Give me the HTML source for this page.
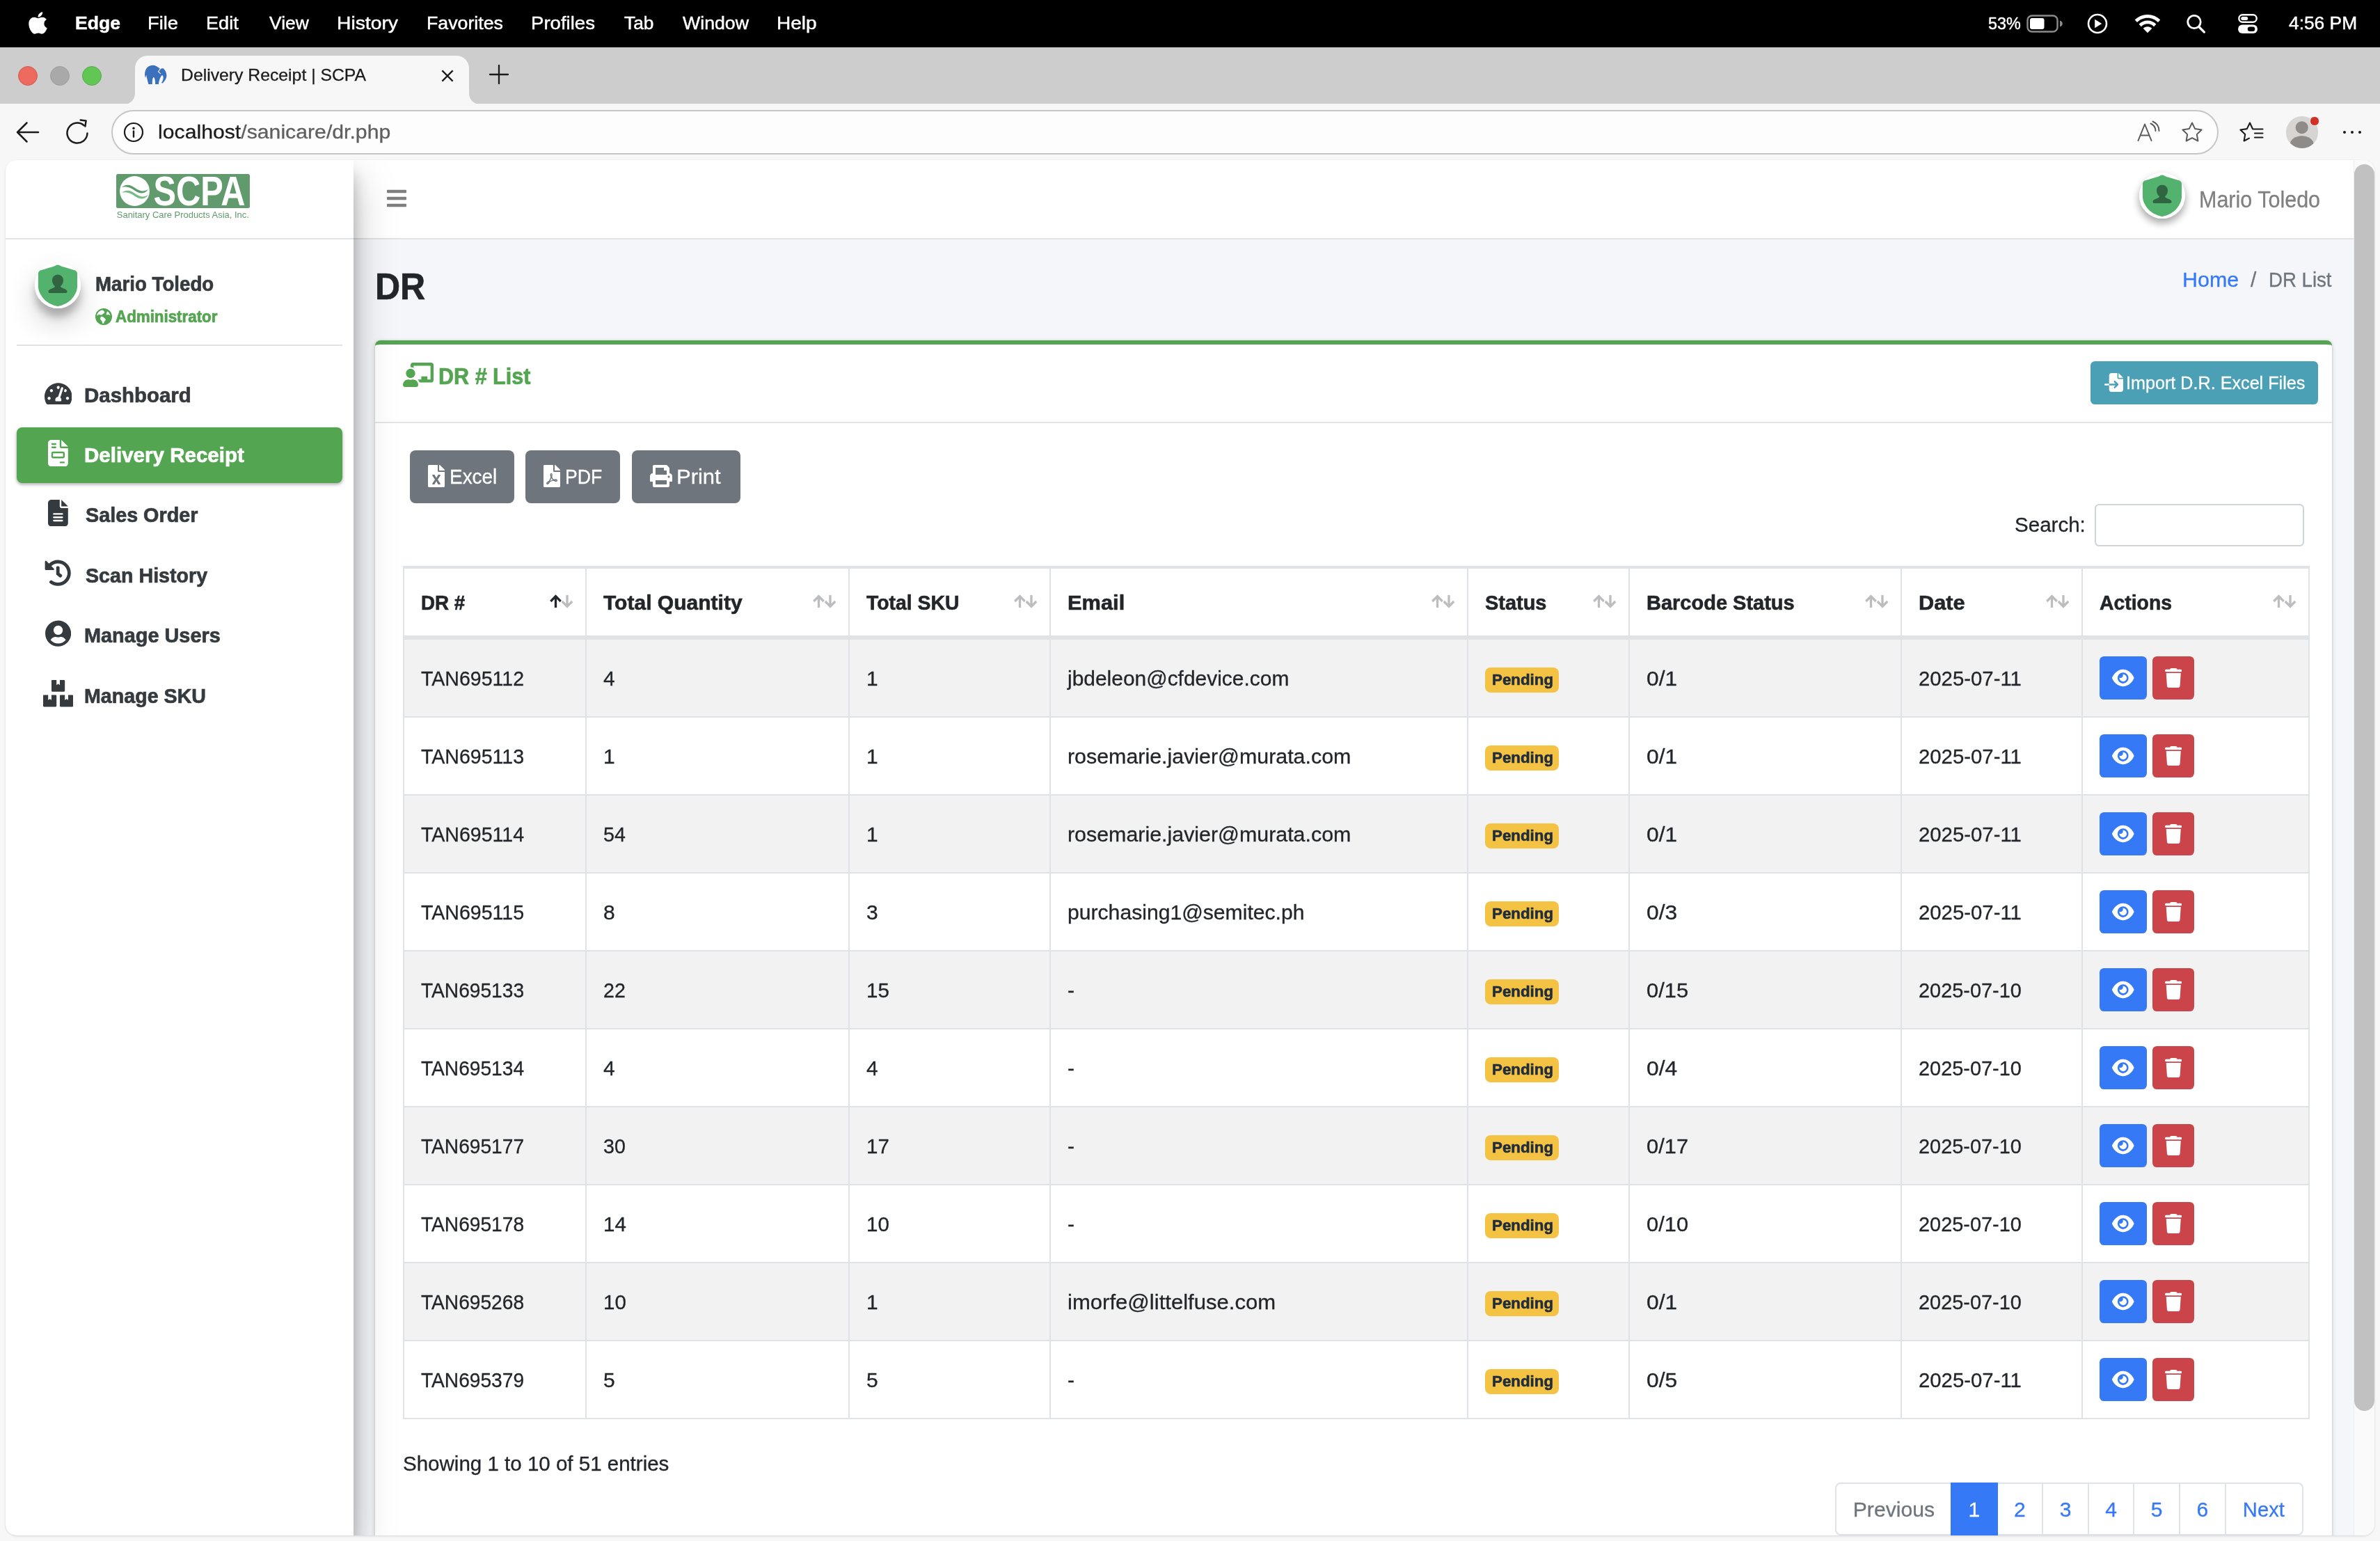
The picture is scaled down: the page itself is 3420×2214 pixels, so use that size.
<!DOCTYPE html>
<html lang="en"><head><meta charset="utf-8"><title>Delivery Receipt | SCPA</title>
<style>
*{box-sizing:border-box}
html,body{margin:0;padding:0}
body{width:3420px;height:2214px;overflow:hidden;position:relative;background:#f7f7f7;font-family:"Liberation Sans",sans-serif;color:#222529}
.t{position:absolute;white-space:nowrap;display:block}
#page{-webkit-text-stroke:.3px}
.t.b{-webkit-text-stroke:.7px}
#dt th,.badge{-webkit-text-stroke:.6px}
svg{display:block}
#menubar,#tabbar,#toolbar,#page{will-change:transform}
#menubar .t{-webkit-text-stroke:.45px #fff}
#tabbar .t{-webkit-text-stroke:.3px #1b1b1b}
#toolbar .t{-webkit-text-stroke:.3px}
#menubar{position:absolute;left:0;top:0;width:3420px;height:68px;background:#000}
#tabbar{position:absolute;left:0;top:68px;width:3420px;height:82px;background:#cdcdcd}
.tl{position:absolute;top:27px;width:28px;height:28px;border-radius:50%;border:1.500px solid}
#toolbar{position:absolute;left:0;top:149px;width:3420px;height:81px;background:#f7f7f7}
#urlbox{position:absolute;left:160px;top:8.700px;width:3028px;height:64px;border-radius:32px;background:#fdfdfd;border:2.500px solid #c6c6c6}
#page{position:absolute;left:8px;top:230px;width:3404px;height:1976px;border-radius:16px;overflow:hidden;background:#f4f6f9;box-shadow:0 1px 3px rgba(0,0,0,.14)}
#sb{position:absolute;left:3374px;top:0;width:30px;height:1976px;background:#fafafa;border-left:1px solid #ececec}
#thumb{position:absolute;left:0;top:6px;width:29px;height:1791px;border-radius:14.500px;background:#c1c1c1}
#navbar{position:absolute;left:500px;top:0;width:2874px;height:114px;background:#fff;border-bottom:2px solid #dfe2e6}
.av{position:absolute;width:66px;height:66px;border-radius:50%;background:#fff;box-shadow:0 20px 40px rgba(0,0,0,.19),0 12px 12px rgba(0,0,0,.23)}
#card{position:absolute;left:531px;top:259px;width:2812px;height:1800px;background:#fff;border-top:6px solid #53a551;border-radius:8px 8px 0 0;box-shadow:0 0 2px rgba(0,0,0,.125),0 2px 6px rgba(0,0,0,.2)}
#card>*{margin-top:-6px}
#cardhead{position:absolute;left:0;top:110.500px;width:2812px;height:2px;background:#e3e4e6;margin-top:0}
.btn{position:absolute}
#search{position:absolute;width:301px;height:61.500px;border:2px solid #cfd4d9;border-radius:6.400px;background:#fff}
#dt{position:absolute;table-layout:fixed;width:2740px;border-collapse:separate;border-spacing:0;border:2px solid #dfe2e6;border-right-width:0;border-bottom-width:2px;font-size:30px}
#dt td>span.tx{position:relative;top:.5px}
#dt th>span{position:relative;top:0.5px}
#dt th,#dt td{padding:0 0 0 24px;text-align:left;white-space:nowrap;overflow:hidden;position:relative;border-right:2px solid #dfe2e6}
#dt th{height:102px;line-height:96px;border-top:2px solid #dfe2e6;border-bottom:4px solid #dfe2e6;font-weight:700}
#dt td{height:112px;line-height:110px;border-top:2px solid #dfe2e6}
#dt tr.odd td{background:#f2f2f2}
#dt tr.even td{background:#fff}
.sort{position:absolute;right:17px;top:36.500px}
.badge{display:inline-block;background:#f5c344;color:#222d3c;font-weight:700;font-size:22.600px;line-height:36px;height:36px;padding:0 0 0 10px;width:106px;border-radius:8px;vertical-align:top;margin-top:40px;overflow:hidden}
.ab{position:absolute;top:24px;height:62px;border-radius:6.400px;display:flex;align-items:center;justify-content:center}
#pg{position:absolute;height:76px;display:flex;font-size:30px}
.pl{display:block;height:76px;line-height:73px;text-align:center;border:2px solid #dfe2e6;margin-left:-2px;background:#fff;white-space:nowrap}
.pl.first{margin-left:0;border-radius:8px 0 0 8px}
.pl.last{border-radius:0 8px 8px 0}
.pl.act{background:#3579f6;border-color:#3579f6;position:relative}
#sidebar{position:absolute;left:0;top:0;width:500px;height:1976px;background:#fff;box-shadow:0 28px 56px rgba(0,0,0,.25),0 20px 20px rgba(0,0,0,.22)}
#brandline{position:absolute;left:0;top:112px;width:500px;height:2px;background:#dfe2e6}
#userline{position:absolute;left:16px;top:265px;width:468px;height:2px;background:#dfe2e6}
#navact{position:absolute;left:16px;width:468px;height:80px;border-radius:8px;background:#53a551;box-shadow:0 2px 6px rgba(0,0,0,.12),0 2px 4px rgba(0,0,0,.24)}
</style></head>
<body>
<div id="menubar">
<svg class="fa" viewBox="0 0 384 512" width="27.00" height="36" style="position:absolute;left:40.8px;top:14.5px" fill="#fff"><path d="M318.7 268.7c-.2-36.7 16.400-64.400 50-84.800-18.800-26.900-47.200-41.700-84.700-44.600-35.500-2.800-74.300 20.700-88.500 20.700-15 0-49.400-19.700-76.400-19.700C63.300 141.200 4 184.800 4 273.500q0 39.300 14.400 81.200c12.800 36.700 59 126.700 107.200 125.200 25.200-.6 43-17.900 75.800-17.900 31.800 0 48.300 17.900 76.400 17.900 48.600-.7 90.400-82.500 102.600-119.300-65.200-30.700-61.700-90-61.700-91.900zm-56.600-164.200c27.300-32.400 24.800-61.900 24-72.500-24.100 1.400-52 16.400-67.900 34.900-17.500 19.800-27.800 44.300-25.600 71.900 26.100 2 49.900-11.400 69.500-34.300z"/></svg>
<span class="t b" style="left:108.0px;top:19.8px;font-size:26px;line-height:26px;color:#fff;font-weight:700;transform:scaleX(1.0225);transform-origin:0 50%;">Edge</span>
<span class="t" style="left:212.2px;top:19.8px;font-size:26px;line-height:26px;color:#fff;font-weight:400;transform:scaleX(1.0498);transform-origin:0 50%;">File</span>
<span class="t" style="left:296.4px;top:19.8px;font-size:26px;line-height:26px;color:#fff;font-weight:400;transform:scaleX(1.0441);transform-origin:0 50%;">Edit</span>
<span class="t" style="left:386.8px;top:19.8px;font-size:26px;line-height:26px;color:#fff;font-weight:400;transform:scaleX(1.0159);transform-origin:0 50%;">View</span>
<span class="t" style="left:484.4px;top:19.8px;font-size:26px;line-height:26px;color:#fff;font-weight:400;transform:scaleX(1.0875);transform-origin:0 50%;">History</span>
<span class="t" style="left:612.6px;top:19.8px;font-size:26px;line-height:26px;color:#fff;font-weight:400;transform:scaleX(1.0284);transform-origin:0 50%;">Favorites</span>
<span class="t" style="left:762.9px;top:19.8px;font-size:26px;line-height:26px;color:#fff;font-weight:400;transform:scaleX(1.0603);transform-origin:0 50%;">Profiles</span>
<span class="t" style="left:897.0px;top:19.8px;font-size:26px;line-height:26px;color:#fff;font-weight:400;transform:scaleX(1.0130);transform-origin:0 50%;">Tab</span>
<span class="t" style="left:980.8px;top:19.8px;font-size:26px;line-height:26px;color:#fff;font-weight:400;transform:scaleX(1.0270);transform-origin:0 50%;">Window</span>
<span class="t" style="left:1116.3px;top:19.8px;font-size:26px;line-height:26px;color:#fff;font-weight:400;transform:scaleX(1.0782);transform-origin:0 50%;">Help</span>
<span class="t" style="left:2856.6px;top:21.5px;font-size:24px;line-height:24px;color:#fff;font-weight:400;transform:scaleX(0.9728);transform-origin:0 50%;">53%</span>
<span class="t" style="left:3289.0px;top:19.8px;font-size:26px;line-height:26px;color:#fff;font-weight:400;transform:scaleX(1.0129);transform-origin:0 50%;">4:56 PM</span>
<svg style="position:absolute;left:2910px;top:18px" width="60" height="32" viewBox="0 0 60 32"><rect x="3.5" y="4.5" width="43" height="23" rx="6.5" fill="none" stroke="#8a8a8a" stroke-width="2.4"/><rect x="7" y="8" width="20.5" height="16" rx="3.2" fill="#fff"/><path d="M50 11.5v9c2.4-.7 3.8-2.500 3.800-4.500s-1.400-3.800-3.800-4.500z" fill="#8a8a8a"/></svg>
<svg style="position:absolute;left:2998px;top:18px" width="32" height="32" viewBox="0 0 32 32"><circle cx="16" cy="16" r="13" fill="none" stroke="#fff" stroke-width="2.6"/><path d="M12.200 9.800v12.400l10-6.200z" fill="#fff"/></svg>
<svg style="position:absolute;left:3067px;top:19px" width="38" height="30" viewBox="0 0 38 30"><path d="M19 2C11.700 2 5.200 4.900 .7 9.600l3.300 3.400C7.800 9.100 13.100 6.700 19 6.700s11.200 2.400 15 6.300l3.300-3.400C32.800 4.900 26.300 2 19 2z" fill="#fff"/><path d="M19 10.600c-4.900 0-9.300 2-12.400 5.200l3.300 3.400c2.300-2.400 5.500-3.900 9.100-3.900s6.800 1.500 9.100 3.900l3.300-3.400c-3.100-3.200-7.500-5.200-12.400-5.200z" fill="#fff"/><path d="M19 19.200c-2.500 0-4.700 1-6.300 2.600L19 28.300l6.300-6.500c-1.600-1.600-3.800-2.600-6.300-2.600z" fill="#fff"/></svg>
<svg style="position:absolute;left:3140px;top:19px" width="32" height="32" viewBox="0 0 32 32"><circle cx="13" cy="12.500" r="9.200" fill="none" stroke="#fff" stroke-width="2.800"/><path d="M19.800 19.500l7.600 7.600" stroke="#fff" stroke-width="3.200" stroke-linecap="round"/></svg>
<svg style="position:absolute;left:3216px;top:20px" width="28" height="28" viewBox="0 0 28 28"><rect x="1.300" y="1.300" width="25.400" height="10.400" rx="5.200" fill="none" stroke="#fff" stroke-width="2.400"/><rect x="4.200" y="4" width="10" height="5" rx="2.500" fill="#fff"/><rect x="0" y="15.500" width="28" height="12.500" rx="6.250" fill="#fff"/><rect x="13.800" y="18.500" width="10.500" height="6.500" rx="3.250" fill="#000"/></svg>
</div>
<div id="tabbar">
<div class="tl" style="left:26px;background:#ed6a5f;border-color:#d5574c"></div>
<div class="tl" style="left:72px;background:#a9a9a9;border-color:#9c9c9c"></div>
<div class="tl" style="left:118px;background:#62c655;border-color:#52ac46"></div>
<svg style="position:absolute;left:178px;top:12px" width="512" height="70" viewBox="0 0 512 70"><path d="M0 70c9 0 16-7 16-16V18C16 8 24 0 34 0h444c10 0 18 8 18 18v36c0 9 7 16 16 16z" fill="#f7f7f7"/></svg>
<svg style="position:absolute;left:207px;top:25px" width="34" height="30" viewBox="0 0 34 30"><path d="M2.100 18.900C1.200 16.800.900 14.500 1.100 12.300 1.400 9.600 2.200 7.400 3.200 5.700 4.400 3.900 6 2.600 7.900 1.800 9.400 1.100 11 .800 12.600.800c1.900 0 3.700.500 5.400 1.400 2 1 3.700 2.400 5.100 3.900 1.300-.600 2.800-1.100 4.300-1.200 1.500 1.300 2.700 2.900 3.500 4.700.900 1.700 1.400 3.500 1.500 5.400.1 2-.400 4-1.500 5.900-1.100 2.200-2.700 4.200-4.700 5.800L25 25.900c1.200-1.500 2-3.200 2.400-5 .3-1.500.3-2.900 0-4.300-.300-.900-.900-1.500-1.600-1.600-1.200 1.300-2.300 3.100-3.100 5.100-.900 2.400-1.500 5.100-1.900 7.800H16.100c.1-2.100 0-4.100-.400-5.900-.400-2-1-3.900-1.900-3.900s-1.500 1.900-1.800 3.900c-.300 1.800-.300 3.800-.200 5.900H6.400C5.800 25.900 5.300 23.900 4.800 22 4.200 19.500 3.700 17 3.200 14.600 2.800 16 2.400 17.500 2.100 18.900Z" fill="#3a70bc"/><path d="M23.700 5.500L20.400 9.800l3.500 3.300" fill="none" stroke="#f7f7f7" stroke-width="1.100" stroke-linejoin="round"/></svg>
<span class="t" style="left:260.0px;top:27.9px;font-size:24px;line-height:24px;color:#1b1b1b;font-weight:400;transform:scaleX(1.0317);transform-origin:0 50%;">Delivery Receipt | SCPA</span>
<svg style="position:absolute;left:632px;top:30px" width="22" height="22" viewBox="0 0 22 22"><path d="M3.400 3.400l15.200 15.200M18.600 3.400L3.400 18.600" stroke="#1b1b1b" stroke-width="2.300" stroke-linecap="butt"/></svg>
<svg style="position:absolute;left:702px;top:24px" width="30" height="30" viewBox="0 0 30 30"><path d="M15 2v26M2 15h26" stroke="#1b1b1b" stroke-width="2.300" stroke-linecap="round"/></svg>
</div>
<div id="toolbar">
<svg style="position:absolute;left:22px;top:23px" width="36" height="36" viewBox="0 0 36 36"><path d="M33 18H4M16.500 4.500L3 18l13.500 13.500" fill="none" stroke="#1b1b1b" stroke-width="2.500" stroke-linecap="round" stroke-linejoin="round"/></svg>
<svg style="position:absolute;left:94px;top:22px" width="36" height="38" viewBox="0 0 36 38"><path d="M31.500 20.500A14.500 14.500 0 1 1 26.700 9.200" fill="none" stroke="#1b1b1b" stroke-width="2.500" stroke-linecap="round"/><path d="M21.500 2.500h8v8" fill="none" stroke="#1b1b1b" stroke-width="2.500" stroke-linecap="round" stroke-linejoin="round" transform="rotate(8 29 3)"/></svg>
<div id="urlbox"></div>
<svg style="position:absolute;left:176px;top:25px" width="32" height="32" viewBox="0 0 32 32"><circle cx="16" cy="16" r="13" fill="none" stroke="#1b1b1b" stroke-width="2.200"/><circle cx="16" cy="10.300" r="1.700" fill="#1b1b1b"/><path d="M16 14.500v8" stroke="#1b1b1b" stroke-width="2.400" stroke-linecap="round"/></svg>
<span class="t" style="left:227.3px;top:26.9px;font-size:28px;line-height:28px;color:#1b1b1b;transform:scaleX(1.0792);transform-origin:0 50%">localhost<span style="color:#5f5f5f">/sanicare/dr.php</span></span>
<svg style="position:absolute;left:3070px;top:24px" width="36" height="32" viewBox="0 0 36 32"><path d="M2.500 29L12 5.500 21.500 29M5.500 21.500h13" fill="none" stroke="#5a5a5a" stroke-width="2" stroke-linejoin="round" stroke-linecap="round"/><path d="M20.500 4.500c4.500 2 7 6 7 10.500M23.500 1.500c5.500 2.500 9 7.500 9 13.500" fill="none" stroke="#5a5a5a" stroke-width="2" stroke-linecap="round"/></svg>
<svg style="position:absolute;left:3134px;top:25px" width="32" height="32" viewBox="0 0 32 32"><path d="M16 2.500l4.200 8.600 9.400 1.400-6.800 6.600 1.600 9.400L16 24.100l-8.400 4.400 1.600-9.400-6.800-6.600 9.400-1.400z" fill="none" stroke="#5a5a5a" stroke-width="2" stroke-linejoin="round"/></svg>
<svg style="position:absolute;left:3218px;top:25px" width="36" height="32" viewBox="0 0 36 32"><path d="M15 2.500l3.800 8.200M15 2.500l-4.200 8.600-9.400 1.400 6.800 6.600-1.600 9.400 7.400-3.900" fill="none" stroke="#1b1b1b" stroke-width="2.100" stroke-linejoin="round" stroke-linecap="round"/><path d="M19.500 11.500h14M22 17.500h11.500M22 23.500h11.500" stroke="#1b1b1b" stroke-width="2.100" stroke-linecap="round"/></svg>
<div style="position:absolute;left:3285.300px;top:18.300px;width:45.400px;height:45.400px;border-radius:50%;overflow:hidden;background:#d6d5d3"><svg width="45.400" height="45.400" viewBox="1.300 1.300 45.400 45.400" fill="#8f8b88"><circle cx="24" cy="17.500" r="9"/><ellipse cx="24" cy="42" rx="17" ry="12.500"/></svg></div>
<div style="position:absolute;left:3319.200px;top:18.200px;width:13.600px;height:13.600px;border-radius:50%;background:#d22f26;border:1.200px solid #f7f7f7"></div>
<div style="position:absolute;left:3366.6px;top:38.600px;width:4.800px;height:4.800px;border-radius:50%;background:#1b1b1b"></div>
<div style="position:absolute;left:3377.6px;top:38.600px;width:4.800px;height:4.800px;border-radius:50%;background:#1b1b1b"></div>
<div style="position:absolute;left:3388.6px;top:38.600px;width:4.800px;height:4.800px;border-radius:50%;background:#1b1b1b"></div>
</div>
<div id="page">
<div id="sb"><div id="thumb"></div></div>
<div id="navbar">
<svg class="fa" viewBox="0 0 448 512" width="28.00" height="32" style="position:absolute;left:48px;top:39.3px" fill="#7f7f7f"><path d="M16 132h416c8.837 0 16-7.163 16-16V76c0-8.837-7.163-16-16-16H16C7.163 60 0 67.163 0 76v40c0 8.837 7.163 16 16 16zm0 160h416c8.837 0 16-7.163 16-16v-40c0-8.837-7.163-16-16-16H16c-8.837 0-16 7.163-16 16v40c0 8.837 7.163 16 16 16zm0 160h416c8.837 0 16-7.163 16-16v-40c0-8.837-7.163-16-16-16H16c-8.837 0-16 7.163-16 16v40c0 8.837 7.163 16 16 16z"/></svg>
<div class="av" style="left:2565.900px;top:17.900px;box-shadow:0 6px 12px rgba(0,0,0,.16),0 6px 12px rgba(0,0,0,.23)"></div>
<svg style="position:absolute;left:2565.9px;top:17.9px" width="66" height="66" viewBox="0 0 66 66"><circle cx="33" cy="33" r="33" fill="#fff"/><path d="M33 3.600C31.800 3.600 30.600 4.100 29.400 4.800 27.200 6 25 6.500 22.900 7.100 19.600 8.100 16.300 9.200 13.100 10.100 10.500 10.800 8.600 11.200 7.600 11.800 5.600 12.900 4.900 14.800 4.900 17V33C4.900 37.500 5.700 41 7.400 44.200 9 47.400 10.800 50.200 13.100 52.700 16 55.800 19.400 58 22.900 59.700 26 61.200 29.500 62.300 31.500 62.800 32.500 63.100 33.500 63.100 34.500 62.800 36.500 62.300 40 61.200 43.100 59.700 46.600 58 50 55.800 52.900 52.700 55.200 50.200 57 47.400 58.600 44.200 60.300 41 61.100 37.500 61.100 33V17C61.100 14.800 60.400 12.900 58.400 11.800 57.400 11.200 55.500 10.800 52.900 10.100 49.700 9.200 46.400 8.100 43.100 7.100 41 6.500 38.800 6 36.600 4.800 35.400 4.100 34.200 3.600 33 3.600Z" fill="#53b36e"/><path d="M33 17.500c-4.700 0-8 3.600-8 8.300 0 3.700 1.700 6.900 4.100 8.500-.2 1.300-1.200 2-3.200 2.600-3.700 1.100-6.400 2.500-6.400 5.100 0 1.200.9 2 2.100 2h22.800c1.200 0 2.100-.8 2.100-2 0-2.600-2.700-4-6.400-5.100-2-.6-3-1.300-3.200-2.600 2.400-1.600 4.100-4.800 4.100-8.500 0-4.700-3.300-8.300-8-8.300z" fill="#316542"/></svg>
<span class="t" style="left:2652.2px;top:39.6px;font-size:33px;line-height:33px;color:#808080;font-weight:400;transform:scaleX(0.9242);transform-origin:0 50%;">Mario Toledo</span>
</div>
<span class="t b" style="left:530.7px;top:153.8px;font-size:54px;line-height:54px;color:#222529;font-weight:700;transform:scaleX(0.9257);transform-origin:0 50%;">DR</span>
<span class="t" style="left:3127.5px;top:157.1px;font-size:30px;line-height:30px;color:#3579f6;font-weight:400;transform:scaleX(1.0150);transform-origin:0 50%;">Home</span>
<span class="t" style="left:3226.0px;top:157.1px;font-size:30px;line-height:30px;color:#6e757c;font-weight:400;;">/</span>
<span class="t" style="left:3251.9px;top:157.1px;font-size:30px;line-height:30px;color:#6e757c;font-weight:400;transform:scaleX(0.9205);transform-origin:0 50%;">DR List</span>
<div id="card">
<div id="cardhead"></div>
<svg class="fa" viewBox="0 0 640 512" width="44.00" height="35.2" style="position:absolute;left:40px;top:32px" fill="#53a551"><path d="M208 352c-2.39 0-4.78.35-7.06 1.09C187.98 357.3 174.35 360 160 360c-14.35 0-27.98-2.7-40.95-6.91-2.28-.74-4.66-1.09-7.05-1.09C49.94 352-.33 402.48 0 464.62.14 490.88 21.73 512 48 512h224c26.27 0 47.86-21.12 48-47.38.33-62.14-49.94-112.62-112-112.62zm-48-32c53.02 0 96-42.98 96-96s-42.98-96-96-96-96 42.98-96 96 42.98 96 96 96zM592 0H208c-26.47 0-48 22.25-48 49.59V96c23.42 0 45.1 6.78 64 17.8V64h352v288h-64v-64H384v64h-76.24c19.1 16.69 33.12 38.73 39.69 64H592c26.47 0 48-22.25 48-49.59V49.59C640 22.25 618.47 0 592 0z"/></svg>
<span class="t b" style="left:91.1px;top:34.6px;font-size:33px;line-height:33px;color:#53a551;font-weight:700;transform:scaleX(0.9260);transform-origin:0 50%;">DR # List</span>
<div class="btn" style="left:2465px;top:30px;width:327px;height:62px;background:#4ba0b5;border-radius:6.4px"></div>
<svg class="fa" viewBox="0 0 512 512" width="27.00" height="27" style="position:absolute;left:2484.5px;top:46.5px" fill="#fff"><path d="M128 64c0-35.300 28.700-64 64-64H352V128c0 17.700 14.300 32 32 32H512V448c0 35.300-28.700 64-64 64H192c-35.300 0-64-28.700-64-64V336H302.100l-39 39c-9.400 9.400-9.400 24.600 0 33.900s24.600 9.400 33.900 0l80-80c9.400-9.400 9.400-24.600 0-33.900l-80-80c-9.400-9.400-24.600-9.400-33.900 0s-9.400 24.600 0 33.900l39 39H128V64zm0 224v48H24c-13.300 0-24-10.700-24-24s10.700-24 24-24H128zM512 128H384V0L512 128z"/></svg>
<span class="t" style="left:2515.8px;top:48.2px;font-size:26.3px;line-height:26.3px;color:#fff;font-weight:400;transform:scaleX(0.9572);transform-origin:0 50%;">Import D.R. Excel Files</span>
<div class="btn" style="left:50px;top:158px;width:150px;height:76px;background:#6e757c;border-radius:8px"></div>
<svg class="fa" viewBox="0 0 384 512" width="24.00" height="32" style="position:absolute;left:76px;top:179px" fill="#fff"><path d="M224 136V0H24C10.700 0 0 10.700 0 24v464c0 13.300 10.700 24 24 24h336c13.300 0 24-10.700 24-24V160H248c-13.200 0-24-10.800-24-24zm60.100 106.500L224 336l60.100 93.500c5.100 8-.6 18.500-10.100 18.500h-34.900c-4.400 0-8.500-2.400-10.600-6.300C208.900 405.500 192 373 192 373c-6.400 14.800-10 20-36.600 68.800-2.100 3.900-6.100 6.300-10.500 6.300H110c-9.500 0-15.200-10.500-10.100-18.500l60.300-93.500-60.300-93.500c-5.200-8 .6-18.500 10.100-18.500h34.800c4.400 0 8.500 2.400 10.600 6.300 26.100 48.800 20 33.600 36.600 68.500 0 0 6.100-11.700 36.600-68.500 2.100-3.900 6.200-6.300 10.600-6.300H274c9.500-.1 15.200 10.400 10.100 18.400zM384 121.900v6.100H256V0h6.100c6.400 0 12.500 2.500 17 7l97.900 98c4.500 4.500 7 10.600 7 16.900z"/></svg>
<span class="t" style="left:106.5px;top:180.6px;font-size:30px;line-height:30px;color:#fff;font-weight:400;transform:scaleX(0.9312);transform-origin:0 50%;">Excel</span>
<div class="btn" style="left:216px;top:158px;width:136px;height:76px;background:#6e757c;border-radius:8px"></div>
<svg class="fa" viewBox="0 0 384 512" width="24.00" height="32" style="position:absolute;left:242px;top:179px" fill="#fff"><path d="M181.900 256.100c-5-16-4.900-46.900-2-46.900 8.400 0 7.600 36.900 2 46.900zm-1.700 47.200c-7.700 20.200-17.300 43.300-28.400 62.700 18.300-7 39-17.200 62.900-21.900-12.700-9.600-24.900-23.400-34.500-40.800zM86.100 428.100c0 .8 13.200-5.400 34.900-40.200-6.700 6.300-29.100 24.500-34.900 40.200zM248 160h136v328c0 13.300-10.700 24-24 24H24c-13.300 0-24-10.700-24-24V24C0 10.700 10.700 0 24 0h200v136c0 13.200 10.800 24 24 24zm-8 171.800c-20-12.200-33.300-29-42.700-53.800 4.500-18.500 11.600-46.600 6.200-64.200-4.700-29.400-42.400-26.500-47.800-6.800-5 18.300-.4 44.100 8.100 77-11.600 27.600-28.700 64.600-40.800 85.800-.1 0-.1.100-.2.100-27.100 13.900-73.600 44.500-54.500 68 5.600 6.900 16 10 21.500 10 17.900 0 35.700-18 61.100-61.800 25.800-8.500 54.100-19.100 79-23.200 21.700 11.800 47.100 19.500 64 19.500 29.200 0 31.200-32 19.700-43.400-13.900-13.600-54.300-9.700-73.600-7.200zM377 105L279 7c-4.500-4.500-10.600-7-17-7h-6v128h128v-6.100c0-6.300-2.500-12.400-7-16.900zm-74.100 255.300c4.100-2.700-2.500-11.900-42.800-9 37.100 15.800 42.800 9 42.800 9z"/></svg>
<span class="t" style="left:273.2px;top:180.6px;font-size:30px;line-height:30px;color:#fff;font-weight:400;transform:scaleX(0.8877);transform-origin:0 50%;">PDF</span>
<div class="btn" style="left:369px;top:158px;width:156px;height:76px;background:#6e757c;border-radius:8px"></div>
<svg class="fa" viewBox="0 0 512 512" width="32.00" height="32" style="position:absolute;left:395px;top:179px" fill="#fff"><path d="M448 192V77.25c0-8.49-3.37-16.62-9.370-22.630L393.370 9.370c-6-6-14.140-9.370-22.630-9.370H96C78.330 0 64 14.330 64 32v160c-35.350 0-64 28.650-64 64v112c0 8.840 7.160 16 16 16h48v96c0 17.670 14.330 32 32 32h320c17.670 0 32-14.330 32-32v-96h48c8.840 0 16-7.160 16-16V256c0-35.350-28.650-64-64-64zm-64 256H128v-96h256v96zm0-224H128V64h192v48c0 8.840 7.160 16 16 16h48v96zm48 72c-13.250 0-24-10.750-24-24 0-13.260 10.750-24 24-24s24 10.740 24 24c0 13.250-10.750 24-24 24z"/></svg>
<span class="t" style="left:433.3px;top:180.6px;font-size:30px;line-height:30px;color:#fff;font-weight:400;transform:scaleX(1.0323);transform-origin:0 50%;">Print</span>
<span class="t" style="left:2356.0px;top:249.9px;font-size:30px;line-height:30px;color:#222529;font-weight:400;transform:scaleX(0.9845);transform-origin:0 50%;">Search:</span>
<div id="search" style="left:2470.5px;top:234.5px"></div>
<table id="dt" style="left:40px;top:324px"><colgroup><col style="width:262px"><col style="width:378px"><col style="width:289px"><col style="width:600px"><col style="width:232px"><col style="width:391px"><col style="width:260px"><col style="width:326px"></colgroup>
<thead><tr>
<th><span style="display:inline-block;transform:scaleX(0.9255);transform-origin:0 50%">DR #</span><svg class="sort" width="34" height="20" viewBox="0 0 34 20"><path d="M8.500 19V3.500M1.300 10l7.200-7.300 7.200 7.300" fill="none" stroke="#222529" stroke-width="3.300" stroke-linejoin="miter"/><path d="M25 1v15.500M17.800 10l7.200 7.300 7.200-7.300" fill="none" stroke="#bcbdbf" stroke-width="3.300" stroke-linejoin="miter"/></svg></th>
<th><span style="display:inline-block;transform:scaleX(1.0007);transform-origin:0 50%">Total Quantity</span><svg class="sort" width="34" height="20" viewBox="0 0 34 20"><path d="M8.500 19V3.500M1.300 10l7.200-7.300 7.200 7.300" fill="none" stroke="#bcbdbf" stroke-width="3.300" stroke-linejoin="miter"/><path d="M25 1v15.500M17.800 10l7.200 7.300 7.200-7.300" fill="none" stroke="#bcbdbf" stroke-width="3.300" stroke-linejoin="miter"/></svg></th>
<th><span style="display:inline-block;transform:scaleX(0.9459);transform-origin:0 50%">Total SKU</span><svg class="sort" width="34" height="20" viewBox="0 0 34 20"><path d="M8.500 19V3.500M1.300 10l7.200-7.300 7.200 7.300" fill="none" stroke="#bcbdbf" stroke-width="3.300" stroke-linejoin="miter"/><path d="M25 1v15.500M17.800 10l7.200 7.300 7.200-7.300" fill="none" stroke="#bcbdbf" stroke-width="3.300" stroke-linejoin="miter"/></svg></th>
<th><span style="display:inline-block;transform:scaleX(1.0273);transform-origin:0 50%">Email</span><svg class="sort" width="34" height="20" viewBox="0 0 34 20"><path d="M8.500 19V3.500M1.300 10l7.200-7.300 7.200 7.300" fill="none" stroke="#bcbdbf" stroke-width="3.300" stroke-linejoin="miter"/><path d="M25 1v15.500M17.800 10l7.200 7.300 7.200-7.300" fill="none" stroke="#bcbdbf" stroke-width="3.300" stroke-linejoin="miter"/></svg></th>
<th><span style="display:inline-block;transform:scaleX(0.9648);transform-origin:0 50%">Status</span><svg class="sort" width="34" height="20" viewBox="0 0 34 20"><path d="M8.500 19V3.500M1.300 10l7.200-7.300 7.200 7.300" fill="none" stroke="#bcbdbf" stroke-width="3.300" stroke-linejoin="miter"/><path d="M25 1v15.500M17.800 10l7.200 7.300 7.200-7.300" fill="none" stroke="#bcbdbf" stroke-width="3.300" stroke-linejoin="miter"/></svg></th>
<th><span style="display:inline-block;transform:scaleX(0.9665);transform-origin:0 50%">Barcode Status</span><svg class="sort" width="34" height="20" viewBox="0 0 34 20"><path d="M8.500 19V3.500M1.300 10l7.200-7.300 7.200 7.300" fill="none" stroke="#bcbdbf" stroke-width="3.300" stroke-linejoin="miter"/><path d="M25 1v15.500M17.800 10l7.200 7.300 7.200-7.300" fill="none" stroke="#bcbdbf" stroke-width="3.300" stroke-linejoin="miter"/></svg></th>
<th><span style="display:inline-block;transform:scaleX(1.0234);transform-origin:0 50%">Date</span><svg class="sort" width="34" height="20" viewBox="0 0 34 20"><path d="M8.500 19V3.500M1.300 10l7.200-7.300 7.200 7.300" fill="none" stroke="#bcbdbf" stroke-width="3.300" stroke-linejoin="miter"/><path d="M25 1v15.500M17.800 10l7.200 7.300 7.200-7.300" fill="none" stroke="#bcbdbf" stroke-width="3.300" stroke-linejoin="miter"/></svg></th>
<th><span style="display:inline-block;transform:scaleX(0.9458);transform-origin:0 50%">Actions</span><svg class="sort" width="34" height="20" viewBox="0 0 34 20"><path d="M8.500 19V3.500M1.300 10l7.200-7.300 7.200 7.300" fill="none" stroke="#bcbdbf" stroke-width="3.300" stroke-linejoin="miter"/><path d="M25 1v15.500M17.800 10l7.200 7.300 7.200-7.300" fill="none" stroke="#bcbdbf" stroke-width="3.300" stroke-linejoin="miter"/></svg></th>
</tr></thead><tbody>
<tr class="odd">
<td><span class="tx" style="display:inline-block;transform:scaleX(0.9512);transform-origin:0 50%">TAN695112</span></td>
<td><span class="tx" style="">4</span></td>
<td><span class="tx" style="">1</span></td>
<td><span class="tx" style="display:inline-block;transform:scaleX(0.9982);transform-origin:0 50%">jbdeleon@cfdevice.com</span></td>
<td><span class="badge"><span style="display:inline-block;transform:scaleX(0.9884);transform-origin:0 50%">Pending</span></span></td>
<td><span class="tx" style="display:inline-block;transform:scaleX(1.0595);transform-origin:0 50%">0/1</span></td>
<td><span class="tx" style="display:inline-block;transform:scaleX(0.9776);transform-origin:0 50%">2025-07-11</span></td>
<td><span class="ab" style="left:24px;width:68px;background:#3579f6"><svg viewBox="0 0 576 512" width="31.500" height="28" fill="#fff"><path d="M288 32c-80.800 0-145.500 36.800-192.600 80.600C48.600 156 17.300 208 2.500 243.700c-3.300 7.900-3.300 16.700 0 24.600C17.300 304 48.600 356 95.400 399.400C142.500 443.200 207.200 480 288 480s145.500-36.800 192.600-80.600c46.800-43.500 78.100-95.400 93-131.100c3.300-7.900 3.300-16.700 0-24.600c-14.900-35.700-46.200-87.700-93-131.100C433.500 68.800 368.800 32 288 32zM144 256a144 144 0 1 1 288 0 144 144 0 1 1 -288 0zm144-64c0 35.300-28.700 64-64 64c-7.100 0-13.900-1.200-20.300-3.300c-5.500-1.800-11.900 1.600-11.700 7.400c.3 6.900 1.300 13.800 3.200 20.700c13.700 51.200 66.400 81.600 117.600 67.900s81.600-66.400 67.900-117.600c-11.100-41.500-47.800-69.400-88.600-71.100c-5.800-.2-9.200 6.100-7.400 11.700c2.100 6.400 3.300 13.200 3.300 20.300z"/></svg></span><span class="ab" style="left:100px;width:60px;background:#cb444a"><svg viewBox="0 0 448 512" width="24.500" height="28" fill="#fff"><path d="M135.200 17.700L128 32H32C14.300 32 0 46.300 0 64S14.300 96 32 96H416c17.700 0 32-14.300 32-32s-14.300-32-32-32H320l-7.200-14.300C307.400 6.800 296.300 0 284.200 0H163.800c-12.100 0-23.200 6.800-28.600 17.700zM416 128H32L53.200 467c1.600 25.300 22.600 45 47.900 45H346.900c25.300 0 46.300-19.700 47.900-45L416 128z"/></svg></span></td>
</tr>
<tr class="even">
<td><span class="tx" style="display:inline-block;transform:scaleX(0.9512);transform-origin:0 50%">TAN695113</span></td>
<td><span class="tx" style="">1</span></td>
<td><span class="tx" style="">1</span></td>
<td><span class="tx" style="display:inline-block;transform:scaleX(1.0127);transform-origin:0 50%">rosemarie.javier@murata.com</span></td>
<td><span class="badge"><span style="display:inline-block;transform:scaleX(0.9884);transform-origin:0 50%">Pending</span></span></td>
<td><span class="tx" style="display:inline-block;transform:scaleX(1.0595);transform-origin:0 50%">0/1</span></td>
<td><span class="tx" style="display:inline-block;transform:scaleX(0.9776);transform-origin:0 50%">2025-07-11</span></td>
<td><span class="ab" style="left:24px;width:68px;background:#3579f6"><svg viewBox="0 0 576 512" width="31.500" height="28" fill="#fff"><path d="M288 32c-80.800 0-145.500 36.800-192.600 80.600C48.600 156 17.300 208 2.500 243.700c-3.300 7.900-3.300 16.700 0 24.600C17.300 304 48.600 356 95.400 399.400C142.500 443.200 207.200 480 288 480s145.500-36.800 192.600-80.600c46.800-43.500 78.100-95.400 93-131.100c3.300-7.900 3.300-16.700 0-24.600c-14.900-35.700-46.200-87.700-93-131.100C433.500 68.800 368.800 32 288 32zM144 256a144 144 0 1 1 288 0 144 144 0 1 1 -288 0zm144-64c0 35.300-28.700 64-64 64c-7.100 0-13.900-1.200-20.300-3.300c-5.500-1.800-11.900 1.600-11.700 7.400c.3 6.900 1.300 13.800 3.200 20.700c13.700 51.200 66.400 81.600 117.600 67.900s81.600-66.400 67.900-117.600c-11.100-41.500-47.800-69.400-88.600-71.100c-5.800-.2-9.200 6.100-7.400 11.700c2.100 6.400 3.300 13.200 3.300 20.300z"/></svg></span><span class="ab" style="left:100px;width:60px;background:#cb444a"><svg viewBox="0 0 448 512" width="24.500" height="28" fill="#fff"><path d="M135.200 17.700L128 32H32C14.300 32 0 46.300 0 64S14.300 96 32 96H416c17.700 0 32-14.300 32-32s-14.300-32-32-32H320l-7.200-14.300C307.400 6.800 296.300 0 284.200 0H163.800c-12.100 0-23.200 6.800-28.600 17.700zM416 128H32L53.200 467c1.600 25.300 22.600 45 47.900 45H346.900c25.300 0 46.300-19.700 47.900-45L416 128z"/></svg></span></td>
</tr>
<tr class="odd">
<td><span class="tx" style="display:inline-block;transform:scaleX(0.9512);transform-origin:0 50%">TAN695114</span></td>
<td><span class="tx" style="display:inline-block;transform:scaleX(0.9531);transform-origin:0 50%">54</span></td>
<td><span class="tx" style="">1</span></td>
<td><span class="tx" style="display:inline-block;transform:scaleX(1.0127);transform-origin:0 50%">rosemarie.javier@murata.com</span></td>
<td><span class="badge"><span style="display:inline-block;transform:scaleX(0.9884);transform-origin:0 50%">Pending</span></span></td>
<td><span class="tx" style="display:inline-block;transform:scaleX(1.0595);transform-origin:0 50%">0/1</span></td>
<td><span class="tx" style="display:inline-block;transform:scaleX(0.9776);transform-origin:0 50%">2025-07-11</span></td>
<td><span class="ab" style="left:24px;width:68px;background:#3579f6"><svg viewBox="0 0 576 512" width="31.500" height="28" fill="#fff"><path d="M288 32c-80.800 0-145.500 36.800-192.600 80.600C48.600 156 17.300 208 2.500 243.700c-3.300 7.900-3.300 16.700 0 24.600C17.300 304 48.600 356 95.400 399.400C142.500 443.200 207.200 480 288 480s145.500-36.800 192.600-80.600c46.800-43.500 78.100-95.400 93-131.100c3.300-7.900 3.300-16.700 0-24.600c-14.900-35.700-46.200-87.700-93-131.100C433.500 68.800 368.800 32 288 32zM144 256a144 144 0 1 1 288 0 144 144 0 1 1 -288 0zm144-64c0 35.300-28.700 64-64 64c-7.100 0-13.900-1.200-20.300-3.300c-5.500-1.800-11.900 1.600-11.700 7.400c.3 6.900 1.300 13.800 3.200 20.700c13.700 51.200 66.400 81.600 117.600 67.900s81.600-66.400 67.900-117.600c-11.100-41.500-47.800-69.400-88.600-71.100c-5.800-.2-9.200 6.100-7.400 11.700c2.100 6.400 3.300 13.200 3.300 20.300z"/></svg></span><span class="ab" style="left:100px;width:60px;background:#cb444a"><svg viewBox="0 0 448 512" width="24.500" height="28" fill="#fff"><path d="M135.200 17.700L128 32H32C14.300 32 0 46.300 0 64S14.300 96 32 96H416c17.700 0 32-14.300 32-32s-14.300-32-32-32H320l-7.200-14.300C307.400 6.800 296.300 0 284.200 0H163.800c-12.100 0-23.200 6.800-28.600 17.700zM416 128H32L53.200 467c1.600 25.300 22.600 45 47.900 45H346.900c25.300 0 46.300-19.700 47.900-45L416 128z"/></svg></span></td>
</tr>
<tr class="even">
<td><span class="tx" style="display:inline-block;transform:scaleX(0.9512);transform-origin:0 50%">TAN695115</span></td>
<td><span class="tx" style="">8</span></td>
<td><span class="tx" style="">3</span></td>
<td><span class="tx" style="display:inline-block;transform:scaleX(1.0045);transform-origin:0 50%">purchasing1@semitec.ph</span></td>
<td><span class="badge"><span style="display:inline-block;transform:scaleX(0.9884);transform-origin:0 50%">Pending</span></span></td>
<td><span class="tx" style="display:inline-block;transform:scaleX(1.0595);transform-origin:0 50%">0/3</span></td>
<td><span class="tx" style="display:inline-block;transform:scaleX(0.9776);transform-origin:0 50%">2025-07-11</span></td>
<td><span class="ab" style="left:24px;width:68px;background:#3579f6"><svg viewBox="0 0 576 512" width="31.500" height="28" fill="#fff"><path d="M288 32c-80.800 0-145.500 36.800-192.600 80.600C48.600 156 17.300 208 2.500 243.700c-3.300 7.900-3.300 16.700 0 24.600C17.300 304 48.600 356 95.400 399.400C142.500 443.200 207.200 480 288 480s145.500-36.800 192.600-80.600c46.800-43.500 78.100-95.400 93-131.100c3.300-7.900 3.300-16.700 0-24.600c-14.900-35.700-46.200-87.700-93-131.100C433.500 68.800 368.800 32 288 32zM144 256a144 144 0 1 1 288 0 144 144 0 1 1 -288 0zm144-64c0 35.300-28.700 64-64 64c-7.100 0-13.900-1.200-20.300-3.300c-5.500-1.800-11.900 1.600-11.700 7.400c.3 6.900 1.300 13.800 3.200 20.700c13.700 51.200 66.400 81.600 117.600 67.900s81.600-66.400 67.900-117.600c-11.100-41.500-47.800-69.400-88.600-71.100c-5.800-.2-9.200 6.100-7.400 11.700c2.100 6.400 3.300 13.200 3.300 20.300z"/></svg></span><span class="ab" style="left:100px;width:60px;background:#cb444a"><svg viewBox="0 0 448 512" width="24.500" height="28" fill="#fff"><path d="M135.200 17.700L128 32H32C14.300 32 0 46.300 0 64S14.300 96 32 96H416c17.700 0 32-14.300 32-32s-14.300-32-32-32H320l-7.200-14.300C307.400 6.800 296.300 0 284.200 0H163.800c-12.100 0-23.200 6.800-28.600 17.700zM416 128H32L53.200 467c1.600 25.300 22.600 45 47.900 45H346.900c25.300 0 46.300-19.700 47.900-45L416 128z"/></svg></span></td>
</tr>
<tr class="odd">
<td><span class="tx" style="display:inline-block;transform:scaleX(0.9377);transform-origin:0 50%">TAN695133</span></td>
<td><span class="tx" style="display:inline-block;transform:scaleX(0.9531);transform-origin:0 50%">22</span></td>
<td><span class="tx" style="display:inline-block;transform:scaleX(0.9842);transform-origin:0 50%">15</span></td>
<td><span class="tx">-</span></td>
<td><span class="badge"><span style="display:inline-block;transform:scaleX(0.9884);transform-origin:0 50%">Pending</span></span></td>
<td><span class="tx" style="display:inline-block;transform:scaleX(1.0281);transform-origin:0 50%">0/15</span></td>
<td><span class="tx" style="display:inline-block;transform:scaleX(0.9633);transform-origin:0 50%">2025-07-10</span></td>
<td><span class="ab" style="left:24px;width:68px;background:#3579f6"><svg viewBox="0 0 576 512" width="31.500" height="28" fill="#fff"><path d="M288 32c-80.800 0-145.500 36.800-192.600 80.600C48.600 156 17.300 208 2.500 243.700c-3.300 7.900-3.300 16.700 0 24.600C17.300 304 48.600 356 95.400 399.400C142.500 443.200 207.200 480 288 480s145.500-36.800 192.600-80.600c46.800-43.500 78.100-95.400 93-131.100c3.300-7.900 3.300-16.700 0-24.600c-14.900-35.700-46.200-87.700-93-131.100C433.500 68.800 368.800 32 288 32zM144 256a144 144 0 1 1 288 0 144 144 0 1 1 -288 0zm144-64c0 35.300-28.700 64-64 64c-7.100 0-13.900-1.200-20.300-3.300c-5.500-1.800-11.900 1.600-11.700 7.400c.3 6.900 1.300 13.800 3.200 20.700c13.700 51.200 66.400 81.600 117.600 67.900s81.600-66.400 67.900-117.600c-11.100-41.500-47.800-69.400-88.600-71.100c-5.800-.2-9.200 6.100-7.400 11.700c2.100 6.400 3.300 13.200 3.300 20.300z"/></svg></span><span class="ab" style="left:100px;width:60px;background:#cb444a"><svg viewBox="0 0 448 512" width="24.500" height="28" fill="#fff"><path d="M135.200 17.700L128 32H32C14.300 32 0 46.300 0 64S14.300 96 32 96H416c17.700 0 32-14.300 32-32s-14.300-32-32-32H320l-7.200-14.300C307.400 6.800 296.300 0 284.200 0H163.800c-12.100 0-23.200 6.800-28.600 17.700zM416 128H32L53.200 467c1.600 25.300 22.600 45 47.900 45H346.900c25.300 0 46.300-19.700 47.900-45L416 128z"/></svg></span></td>
</tr>
<tr class="even">
<td><span class="tx" style="display:inline-block;transform:scaleX(0.9377);transform-origin:0 50%">TAN695134</span></td>
<td><span class="tx" style="">4</span></td>
<td><span class="tx" style="">4</span></td>
<td><span class="tx">-</span></td>
<td><span class="badge"><span style="display:inline-block;transform:scaleX(0.9884);transform-origin:0 50%">Pending</span></span></td>
<td><span class="tx" style="display:inline-block;transform:scaleX(1.0595);transform-origin:0 50%">0/4</span></td>
<td><span class="tx" style="display:inline-block;transform:scaleX(0.9633);transform-origin:0 50%">2025-07-10</span></td>
<td><span class="ab" style="left:24px;width:68px;background:#3579f6"><svg viewBox="0 0 576 512" width="31.500" height="28" fill="#fff"><path d="M288 32c-80.800 0-145.500 36.800-192.600 80.600C48.600 156 17.300 208 2.500 243.700c-3.300 7.900-3.300 16.700 0 24.600C17.300 304 48.600 356 95.400 399.400C142.500 443.200 207.200 480 288 480s145.500-36.800 192.600-80.600c46.800-43.500 78.100-95.400 93-131.100c3.300-7.900 3.300-16.700 0-24.600c-14.900-35.700-46.200-87.700-93-131.100C433.500 68.800 368.800 32 288 32zM144 256a144 144 0 1 1 288 0 144 144 0 1 1 -288 0zm144-64c0 35.300-28.700 64-64 64c-7.100 0-13.900-1.200-20.300-3.300c-5.500-1.800-11.900 1.600-11.700 7.400c.3 6.900 1.300 13.800 3.200 20.700c13.700 51.200 66.400 81.600 117.600 67.900s81.600-66.400 67.900-117.600c-11.100-41.500-47.800-69.400-88.600-71.100c-5.800-.2-9.200 6.100-7.400 11.700c2.100 6.400 3.300 13.200 3.300 20.300z"/></svg></span><span class="ab" style="left:100px;width:60px;background:#cb444a"><svg viewBox="0 0 448 512" width="24.500" height="28" fill="#fff"><path d="M135.200 17.700L128 32H32C14.300 32 0 46.300 0 64S14.300 96 32 96H416c17.700 0 32-14.300 32-32s-14.300-32-32-32H320l-7.200-14.300C307.400 6.800 296.300 0 284.200 0H163.800c-12.100 0-23.200 6.800-28.600 17.700zM416 128H32L53.200 467c1.600 25.300 22.600 45 47.900 45H346.900c25.300 0 46.300-19.700 47.900-45L416 128z"/></svg></span></td>
</tr>
<tr class="odd">
<td><span class="tx" style="display:inline-block;transform:scaleX(0.9377);transform-origin:0 50%">TAN695177</span></td>
<td><span class="tx" style="display:inline-block;transform:scaleX(0.9531);transform-origin:0 50%">30</span></td>
<td><span class="tx" style="display:inline-block;transform:scaleX(0.9842);transform-origin:0 50%">17</span></td>
<td><span class="tx">-</span></td>
<td><span class="badge"><span style="display:inline-block;transform:scaleX(0.9884);transform-origin:0 50%">Pending</span></span></td>
<td><span class="tx" style="display:inline-block;transform:scaleX(1.0281);transform-origin:0 50%">0/17</span></td>
<td><span class="tx" style="display:inline-block;transform:scaleX(0.9633);transform-origin:0 50%">2025-07-10</span></td>
<td><span class="ab" style="left:24px;width:68px;background:#3579f6"><svg viewBox="0 0 576 512" width="31.500" height="28" fill="#fff"><path d="M288 32c-80.800 0-145.500 36.800-192.600 80.600C48.600 156 17.300 208 2.500 243.700c-3.300 7.900-3.300 16.700 0 24.600C17.300 304 48.600 356 95.400 399.400C142.500 443.200 207.200 480 288 480s145.500-36.800 192.600-80.600c46.800-43.500 78.100-95.400 93-131.100c3.300-7.900 3.300-16.700 0-24.600c-14.900-35.700-46.200-87.700-93-131.100C433.500 68.800 368.800 32 288 32zM144 256a144 144 0 1 1 288 0 144 144 0 1 1 -288 0zm144-64c0 35.300-28.700 64-64 64c-7.100 0-13.900-1.200-20.300-3.300c-5.500-1.800-11.900 1.600-11.700 7.400c.3 6.900 1.300 13.800 3.200 20.700c13.700 51.200 66.400 81.600 117.600 67.900s81.600-66.400 67.900-117.600c-11.100-41.500-47.800-69.400-88.600-71.100c-5.800-.2-9.200 6.100-7.400 11.700c2.100 6.400 3.300 13.200 3.300 20.300z"/></svg></span><span class="ab" style="left:100px;width:60px;background:#cb444a"><svg viewBox="0 0 448 512" width="24.500" height="28" fill="#fff"><path d="M135.200 17.700L128 32H32C14.300 32 0 46.300 0 64S14.300 96 32 96H416c17.700 0 32-14.300 32-32s-14.300-32-32-32H320l-7.200-14.300C307.400 6.800 296.300 0 284.200 0H163.800c-12.100 0-23.200 6.800-28.600 17.700zM416 128H32L53.200 467c1.600 25.300 22.600 45 47.900 45H346.900c25.300 0 46.300-19.700 47.900-45L416 128z"/></svg></span></td>
</tr>
<tr class="even">
<td><span class="tx" style="display:inline-block;transform:scaleX(0.9377);transform-origin:0 50%">TAN695178</span></td>
<td><span class="tx" style="display:inline-block;transform:scaleX(0.9842);transform-origin:0 50%">14</span></td>
<td><span class="tx" style="display:inline-block;transform:scaleX(0.9842);transform-origin:0 50%">10</span></td>
<td><span class="tx">-</span></td>
<td><span class="badge"><span style="display:inline-block;transform:scaleX(0.9884);transform-origin:0 50%">Pending</span></span></td>
<td><span class="tx" style="display:inline-block;transform:scaleX(1.0281);transform-origin:0 50%">0/10</span></td>
<td><span class="tx" style="display:inline-block;transform:scaleX(0.9633);transform-origin:0 50%">2025-07-10</span></td>
<td><span class="ab" style="left:24px;width:68px;background:#3579f6"><svg viewBox="0 0 576 512" width="31.500" height="28" fill="#fff"><path d="M288 32c-80.800 0-145.500 36.800-192.600 80.600C48.600 156 17.300 208 2.500 243.700c-3.300 7.900-3.300 16.700 0 24.600C17.300 304 48.600 356 95.400 399.400C142.500 443.200 207.200 480 288 480s145.500-36.800 192.600-80.600c46.800-43.500 78.100-95.400 93-131.100c3.300-7.900 3.300-16.700 0-24.600c-14.900-35.700-46.200-87.700-93-131.100C433.500 68.800 368.800 32 288 32zM144 256a144 144 0 1 1 288 0 144 144 0 1 1 -288 0zm144-64c0 35.300-28.700 64-64 64c-7.100 0-13.900-1.200-20.300-3.300c-5.500-1.800-11.900 1.600-11.700 7.400c.3 6.900 1.300 13.800 3.200 20.700c13.700 51.200 66.400 81.600 117.600 67.900s81.600-66.400 67.900-117.600c-11.100-41.500-47.800-69.400-88.600-71.100c-5.800-.2-9.200 6.100-7.400 11.700c2.100 6.400 3.300 13.200 3.300 20.300z"/></svg></span><span class="ab" style="left:100px;width:60px;background:#cb444a"><svg viewBox="0 0 448 512" width="24.500" height="28" fill="#fff"><path d="M135.200 17.700L128 32H32C14.300 32 0 46.300 0 64S14.300 96 32 96H416c17.700 0 32-14.300 32-32s-14.300-32-32-32H320l-7.200-14.300C307.400 6.800 296.300 0 284.200 0H163.800c-12.100 0-23.200 6.800-28.600 17.700zM416 128H32L53.200 467c1.600 25.300 22.600 45 47.900 45H346.900c25.300 0 46.300-19.700 47.900-45L416 128z"/></svg></span></td>
</tr>
<tr class="odd">
<td><span class="tx" style="display:inline-block;transform:scaleX(0.9377);transform-origin:0 50%">TAN695268</span></td>
<td><span class="tx" style="display:inline-block;transform:scaleX(0.9842);transform-origin:0 50%">10</span></td>
<td><span class="tx" style="">1</span></td>
<td><span class="tx" style="display:inline-block;transform:scaleX(1.0354);transform-origin:0 50%">imorfe@littelfuse.com</span></td>
<td><span class="badge"><span style="display:inline-block;transform:scaleX(0.9884);transform-origin:0 50%">Pending</span></span></td>
<td><span class="tx" style="display:inline-block;transform:scaleX(1.0595);transform-origin:0 50%">0/1</span></td>
<td><span class="tx" style="display:inline-block;transform:scaleX(0.9633);transform-origin:0 50%">2025-07-10</span></td>
<td><span class="ab" style="left:24px;width:68px;background:#3579f6"><svg viewBox="0 0 576 512" width="31.500" height="28" fill="#fff"><path d="M288 32c-80.800 0-145.500 36.800-192.600 80.600C48.600 156 17.300 208 2.500 243.700c-3.300 7.900-3.300 16.700 0 24.600C17.300 304 48.600 356 95.400 399.400C142.500 443.200 207.200 480 288 480s145.500-36.800 192.600-80.600c46.800-43.500 78.100-95.400 93-131.100c3.300-7.900 3.300-16.700 0-24.600c-14.900-35.700-46.200-87.700-93-131.100C433.500 68.800 368.800 32 288 32zM144 256a144 144 0 1 1 288 0 144 144 0 1 1 -288 0zm144-64c0 35.300-28.700 64-64 64c-7.100 0-13.900-1.200-20.300-3.300c-5.500-1.800-11.900 1.600-11.700 7.400c.3 6.900 1.300 13.800 3.200 20.700c13.700 51.200 66.400 81.600 117.600 67.900s81.600-66.400 67.900-117.600c-11.100-41.500-47.800-69.400-88.600-71.100c-5.800-.2-9.200 6.100-7.400 11.700c2.100 6.400 3.300 13.200 3.300 20.300z"/></svg></span><span class="ab" style="left:100px;width:60px;background:#cb444a"><svg viewBox="0 0 448 512" width="24.500" height="28" fill="#fff"><path d="M135.200 17.700L128 32H32C14.300 32 0 46.300 0 64S14.300 96 32 96H416c17.700 0 32-14.300 32-32s-14.300-32-32-32H320l-7.200-14.300C307.400 6.800 296.300 0 284.200 0H163.800c-12.100 0-23.200 6.800-28.600 17.700zM416 128H32L53.200 467c1.600 25.300 22.600 45 47.900 45H346.900c25.300 0 46.300-19.700 47.900-45L416 128z"/></svg></span></td>
</tr>
<tr class="even">
<td><span class="tx" style="display:inline-block;transform:scaleX(0.9377);transform-origin:0 50%">TAN695379</span></td>
<td><span class="tx" style="">5</span></td>
<td><span class="tx" style="">5</span></td>
<td><span class="tx">-</span></td>
<td><span class="badge"><span style="display:inline-block;transform:scaleX(0.9884);transform-origin:0 50%">Pending</span></span></td>
<td><span class="tx" style="display:inline-block;transform:scaleX(1.0595);transform-origin:0 50%">0/5</span></td>
<td><span class="tx" style="display:inline-block;transform:scaleX(0.9776);transform-origin:0 50%">2025-07-11</span></td>
<td><span class="ab" style="left:24px;width:68px;background:#3579f6"><svg viewBox="0 0 576 512" width="31.500" height="28" fill="#fff"><path d="M288 32c-80.800 0-145.500 36.800-192.600 80.600C48.600 156 17.300 208 2.500 243.700c-3.300 7.900-3.300 16.700 0 24.600C17.300 304 48.600 356 95.400 399.400C142.500 443.200 207.200 480 288 480s145.500-36.800 192.600-80.600c46.800-43.500 78.100-95.400 93-131.100c3.300-7.900 3.300-16.700 0-24.600c-14.900-35.700-46.200-87.700-93-131.100C433.500 68.800 368.800 32 288 32zM144 256a144 144 0 1 1 288 0 144 144 0 1 1 -288 0zm144-64c0 35.300-28.700 64-64 64c-7.100 0-13.900-1.200-20.300-3.300c-5.500-1.800-11.900 1.600-11.700 7.400c.3 6.900 1.300 13.800 3.200 20.700c13.700 51.200 66.400 81.600 117.600 67.900s81.600-66.400 67.900-117.600c-11.100-41.500-47.800-69.400-88.600-71.100c-5.800-.2-9.200 6.100-7.400 11.700c2.100 6.400 3.300 13.200 3.300 20.300z"/></svg></span><span class="ab" style="left:100px;width:60px;background:#cb444a"><svg viewBox="0 0 448 512" width="24.500" height="28" fill="#fff"><path d="M135.200 17.700L128 32H32C14.300 32 0 46.300 0 64S14.300 96 32 96H416c17.700 0 32-14.300 32-32s-14.300-32-32-32H320l-7.200-14.300C307.400 6.800 296.300 0 284.200 0H163.800c-12.100 0-23.200 6.800-28.600 17.700zM416 128H32L53.200 467c1.600 25.300 22.600 45 47.900 45H346.900c25.300 0 46.300-19.700 47.900-45L416 128z"/></svg></span></td>
</tr>
</tbody></table>
<span class="t" style="left:39.5px;top:1598.6px;font-size:30px;line-height:30px;color:#222529;font-weight:400;transform:scaleX(0.9840);transform-origin:0 50%;">Showing 1 to 10 of 51 entries</span>
<div id="pg" style="left:2098px;top:1641px">
<span class="pl first" style="width:168px;color:#6e757c"><span style="display:inline-block;transform:scaleX(1.0042);transform-origin:50% 50%">Previous</span></span>
<span class="pl act" style="width:67.6px;color:#fff"><span style="">1</span></span>
<span class="pl" style="width:67.6px;color:#3579f6"><span style="">2</span></span>
<span class="pl" style="width:67.6px;color:#3579f6"><span style="">3</span></span>
<span class="pl" style="width:67.6px;color:#3579f6"><span style="">4</span></span>
<span class="pl" style="width:67.6px;color:#3579f6"><span style="">5</span></span>
<span class="pl" style="width:67.6px;color:#3579f6"><span style="">6</span></span>
<span class="pl last" style="width:113.4px;color:#3579f6"><span style="display:inline-block;transform:scaleX(0.9727);transform-origin:50% 50%">Next</span></span>
</div>
</div>
<div id="sidebar">
<svg style="position:absolute;left:159px;top:20px" width="192" height="66" viewBox="0 0 192 66"><rect x="0" y="0" width="192" height="49" rx="2.500" fill="#619b6d"/><circle cx="26.500" cy="24.500" r="21.400" fill="#fff"/><path d="M8 19c6-5 12-4 19 1s13 6 19 2c-5 7-12 7-19 2s-13-7-19-5z" fill="#5d9a6b"/><path d="M8 27c6-5 12-4 19 1s13 6 19 2c-5 7-12 7-19 2s-13-7-19-5z" fill="#78bb88"/><text x="53.500" y="44.500" font-family="Liberation Sans, sans-serif" font-weight="700" font-size="58.500" fill="#fff" textLength="132" lengthAdjust="spacingAndGlyphs">SCPA</text><text x="0.800" y="63.300" font-family="Liberation Sans, sans-serif" font-size="13.600" fill="#619b6d" textLength="190" lengthAdjust="spacingAndGlyphs">Sanitary Care Products Asia, Inc.</text></svg>
<div id="brandline"></div>
<div class="av" style="left:42px;top:146.500px"></div>
<svg style="position:absolute;left:42px;top:146.5px" width="66" height="66" viewBox="0 0 66 66"><circle cx="33" cy="33" r="33" fill="#fff"/><path d="M33 3.600C31.800 3.600 30.600 4.100 29.400 4.800 27.200 6 25 6.500 22.900 7.100 19.600 8.100 16.300 9.200 13.100 10.100 10.500 10.800 8.600 11.200 7.600 11.800 5.600 12.900 4.900 14.800 4.900 17V33C4.900 37.500 5.700 41 7.400 44.200 9 47.400 10.800 50.200 13.100 52.700 16 55.800 19.400 58 22.900 59.700 26 61.200 29.500 62.300 31.500 62.800 32.500 63.100 33.500 63.100 34.500 62.800 36.500 62.300 40 61.200 43.100 59.700 46.600 58 50 55.800 52.900 52.700 55.200 50.200 57 47.400 58.600 44.200 60.300 41 61.100 37.500 61.100 33V17C61.100 14.800 60.400 12.900 58.400 11.800 57.400 11.200 55.500 10.800 52.900 10.100 49.700 9.200 46.400 8.100 43.100 7.100 41 6.500 38.800 6 36.600 4.800 35.400 4.100 34.200 3.600 33 3.600Z" fill="#53b36e"/><path d="M33 17.500c-4.700 0-8 3.600-8 8.300 0 3.700 1.700 6.900 4.100 8.500-.2 1.300-1.200 2-3.200 2.600-3.700 1.100-6.400 2.500-6.400 5.100 0 1.200.9 2 2.100 2h22.800c1.200 0 2.100-.8 2.100-2 0-2.600-2.700-4-6.400-5.100-2-.6-3-1.300-3.200-2.600 2.400-1.600 4.100-4.800 4.100-8.500 0-4.700-3.300-8.300-8-8.300z" fill="#316542"/></svg>
<span class="t b" style="left:128.5px;top:163.2px;font-size:30px;line-height:30px;color:#353a3f;font-weight:700;transform:scaleX(0.9231);transform-origin:0 50%;">Mario Toledo</span>
<svg style="position:absolute;left:129px;top:213px" width="24" height="24" viewBox="0 0 24 24"><circle cx="12" cy="12" r="12" fill="#53a551"/><path d="M9.500 2.500c2 .3 3.300 1.400 3.600 2.800.3 1.300-.8 2-2 2.600-1.200.6-1.600 1.500-2.800 1.600-1.300.1-2.300-.7-3.600-.3-1.100.3-1.700 1.200-2.500 1.300.4-3.600 3.200-7 7.300-8zM8.500 11.800c1.600-.2 3 .6 4 1.700.9 1 2.300 1.300 2.300 2.700 0 1.500-1.500 2.100-2 3.300-.4 1-.5 2.400-1.600 2.400-1 0-1.300-1.400-1.500-2.500-.3-1.500-1.700-2-2.300-3.300-.5-1.100-.2-2.400.3-3.300.2-.5.400-.9.800-1zM17.300 4.300c2 1.400 3.500 3.500 4 6-.9-.3-1.500-1.200-2.500-1.300-1-.1-1.800.8-2.600.3-.8-.5-.5-1.700-.1-2.500.4-.9.700-1.700 1.200-2.500z" fill="#fff"/></svg>
<span class="t b" style="left:157.9px;top:214.1px;font-size:23px;line-height:23px;color:#53a551;font-weight:700;transform:scaleX(0.9712);transform-origin:0 50%;">Administrator</span>
<div id="userline"></div>
<svg class="fa" viewBox="0 0 576 512" width="39.60" height="35.2" style="position:absolute;left:55.5px;top:318.2px" fill="#353a3f"><path d="M288 32C128.94 32 0 160.94 0 320c0 52.8 14.25 102.26 39.06 144.8 5.61 9.62 16.3 15.2 27.44 15.2h443c11.14 0 21.83-5.58 27.44-15.2C561.75 422.26 576 372.8 576 320c0-159.06-128.94-288-288-288zm0 64c14.71 0 26.58 10.13 30.32 23.65-1.11 2.26-2.64 4.23-3.45 6.67l-9.22 27.67c-5.13 3.49-10.97 6.01-17.64 6.01-17.67 0-32-14.33-32-32S270.33 96 288 96zM96 384c-17.67 0-32-14.33-32-32s14.33-32 32-32 32 14.33 32 32-14.33 32-32 32zm48-160c-17.67 0-32-14.33-32-32s14.33-32 32-32 32 14.33 32 32-14.33 32-32 32zm246.77-72.41l-61.33 184C343.13 347.33 352 364.54 352 384c0 11.72-3.38 22.55-8.88 32H232.88c-5.5-9.45-8.88-20.28-8.88-32 0-33.94 26.5-61.43 59.9-63.59l61.34-184.01c4.17-12.56 17.73-19.45 30.36-15.17 12.57 4.19 19.35 17.79 15.17 30.36zm14.66 57.2l15.52-46.55c3.47-1.29 7.13-2.23 11.05-2.23 17.67 0 32 14.33 32 32s-14.33 32-32 32c-11.38-.01-20.89-6.28-26.57-15.22zM480 384c-17.67 0-32-14.33-32-32s14.33-32 32-32 32 14.33 32 32-14.33 32-32 32z"/></svg>
<span class="t b" style="left:112.5px;top:322.5px;font-size:30px;line-height:30px;color:#353a3f;font-weight:700;transform:scaleX(0.9813);transform-origin:0 50%;">Dashboard</span>
<div id="navact" style="top:384.0px"></div>
<svg class="fa" viewBox="0 0 384 512" width="28.80" height="38.4" style="position:absolute;left:60.9px;top:401.6px" fill="#fff"><path d="M64 0C28.700 0 0 28.700 0 64V448c0 35.300 28.700 64 64 64H320c35.300 0 64-28.700 64-64V160H256c-17.700 0-32-14.300-32-32V0H64zM256 0V128H384L256 0zM80 64h64c8.800 0 16 7.200 16 16s-7.200 16-16 16H80c-8.800 0-16-7.200-16-16s7.200-16 16-16zm0 64h64c8.800 0 16 7.200 16 16s-7.200 16-16 16H80c-8.800 0-16-7.200-16-16s7.200-16 16-16zm16 96H288c17.700 0 32 14.300 32 32v64c0 17.700-14.300 32-32 32H96c-17.700 0-32-14.300-32-32V256c0-17.700 14.300-32 32-32zm0 32v64H288V256H96zM240 416h64c8.800 0 16 7.200 16 16s-7.200 16-16 16H240c-8.800 0-16-7.200-16-16s7.200-16 16-16z"/></svg>
<span class="t b" style="left:112.5px;top:408.9px;font-size:30px;line-height:30px;color:#fff;font-weight:700;transform:scaleX(0.9846);transform-origin:0 50%;">Delivery Receipt</span>
<svg class="fa" viewBox="0 0 384 512" width="28.80" height="38.4" style="position:absolute;left:60.9px;top:488.0px" fill="#353a3f"><path d="M64 0C28.700 0 0 28.700 0 64V448c0 35.300 28.700 64 64 64H320c35.300 0 64-28.700 64-64V160H256c-17.700 0-32-14.300-32-32V0H64zM256 0V128H384L256 0zM112 256H272c8.800 0 16 7.200 16 16s-7.200 16-16 16H112c-8.800 0-16-7.200-16-16s7.200-16 16-16zm0 64H272c8.800 0 16 7.200 16 16s-7.200 16-16 16H112c-8.800 0-16-7.200-16-16s7.200-16 16-16zm0 64H272c8.800 0 16 7.200 16 16s-7.200 16-16 16H112c-8.800 0-16-7.200-16-16s7.200-16 16-16z"/></svg>
<span class="t b" style="left:114.5px;top:495.3px;font-size:30px;line-height:30px;color:#353a3f;font-weight:700;transform:scaleX(0.9582);transform-origin:0 50%;">Sales Order</span>
<svg class="fa" viewBox="0 0 512 512" width="38.40" height="38.4" style="position:absolute;left:56.1px;top:574.4px" fill="#353a3f"><path d="M504 255.531c.253 136.64-111.18 248.372-247.82 248.468-59.015.042-113.223-20.53-155.822-54.911-11.077-8.94-11.905-25.541-1.839-35.607l11.267-11.267c8.609-8.609 22.353-9.551 31.891-1.984C173.062 425.135 212.781 440 256 440c101.705 0 184-82.311 184-184 0-101.705-82.311-184-184-184-48.814 0-93.149 18.969-126.068 49.932l50.754 50.754c10.08 10.08 2.941 27.314-11.313 27.314H24c-8.837 0-16-7.163-16-16V38.627c0-14.254 17.234-21.393 27.314-11.314l49.372 49.372C129.209 34.136 189.552 8 256 8c136.81 0 247.747 110.78 248 247.531zm-180.912 78.784l9.823-12.63c8.138-10.463 6.253-25.542-4.21-33.679L288 256.349V152c0-13.255-10.745-24-24-24h-16c-13.255 0-24 10.745-24 24v135.651l65.409 50.874c10.463 8.137 25.541 6.253 33.679-4.21z"/></svg>
<span class="t b" style="left:114.5px;top:581.7px;font-size:30px;line-height:30px;color:#353a3f;font-weight:700;transform:scaleX(0.9553);transform-origin:0 50%;">Scan History</span>
<svg class="fa" viewBox="0 0 496 512" width="37.20" height="38.4" style="position:absolute;left:56.7px;top:660.8px" fill="#353a3f"><path d="M248 8C111 8 0 119 0 256s111 248 248 248 248-111 248-248S385 8 248 8zm0 96c48.6 0 88 39.4 88 88s-39.4 88-88 88-88-39.4-88-88 39.4-88 88-88zm0 344c-58.7 0-111.3-26.6-146.5-68.2 18.8-35.4 55.6-59.8 98.5-59.8 2.4 0 4.8.4 7.1 1.1 13 4.2 26.6 6.9 40.9 6.9 14.3 0 28-2.7 40.9-6.9 2.3-.7 4.7-1.1 7.1-1.1 42.9 0 79.7 24.4 98.5 59.8C359.3 421.4 306.7 448 248 448z"/></svg>
<span class="t b" style="left:112.6px;top:668.1px;font-size:30px;line-height:30px;color:#353a3f;font-weight:700;transform:scaleX(0.9624);transform-origin:0 50%;">Manage Users</span>
<svg class="fa" viewBox="0 0 576 512" width="43.20" height="38.4" style="position:absolute;left:53.7px;top:747.2px" fill="#353a3f"><path d="M560 288h-80v96l-32-21.3-32 21.3v-96h-80c-8.8 0-16 7.2-16 16v192c0 8.8 7.2 16 16 16h224c8.8 0 16-7.2 16-16V304c0-8.8-7.2-16-16-16zm-384-64h224c8.8 0 16-7.2 16-16V16c0-8.8-7.2-16-16-16h-80v96l-32-21.3L256 96V0h-80c-8.8 0-16 7.2-16 16v192c0 8.8 7.2 16 16 16zm64 64h-80v96l-32-21.3L96 384v-96H16c-8.8 0-16 7.2-16 16v192c0 8.8 7.2 16 16 16h224c8.8 0 16-7.2 16-16V304c0-8.8-7.2-16-16-16z"/></svg>
<span class="t b" style="left:112.6px;top:754.5px;font-size:30px;line-height:30px;color:#353a3f;font-weight:700;transform:scaleX(0.9543);transform-origin:0 50%;">Manage SKU</span>
</div>
</div>
</body></html>
